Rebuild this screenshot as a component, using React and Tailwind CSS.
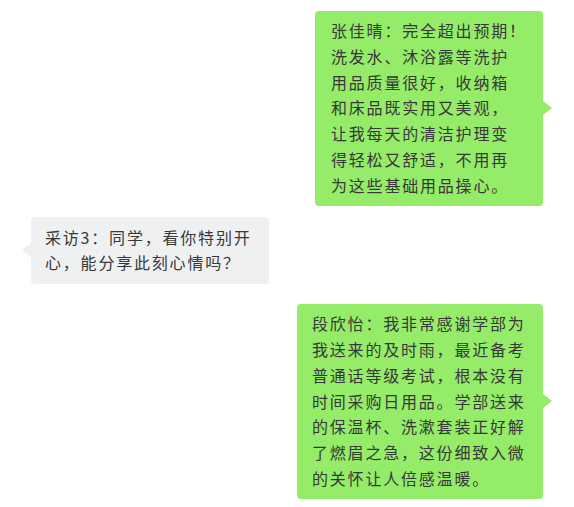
import React from "react";

function Bubble({ lines, side, className }) {
  const green = side === "right";
  return (
    <div className={`relative rounded-[4px] ${green ? "bg-[#95ec69]" : "bg-[#eef0f1]"} ${className}`}>
      {lines.map((l, i) => (
        <div key={i} className="whitespace-nowrap">{l}</div>
      ))}
      <div
        className={`absolute top-1/2 -translate-y-1/2 w-0 h-0 border-y-[7px] border-y-transparent ${
          green
            ? "right-[-9px] border-l-[9px] border-l-[#95ec69]"
            : "left-[-9px] border-r-[9px] border-r-[#eef0f1]"
        }`}
      />
    </div>
  );
}

export default function App() {
  return (
    <div
      className="w-[574px] h-[507px] bg-white px-[31px] pt-[11px] flex flex-col text-[16px] leading-[25.8px] tracking-[1.8px] text-[#383838]"
      style={{ fontFamily: '"Noto Sans CJK SC", "Noto Sans", sans-serif' }}
    >
      <div className="flex justify-end">
        <Bubble
          side="right"
          className="w-[228px] pl-4 py-[7px]"
          lines={[
            "张佳晴：完全超出预期！",
            "洗发水、沐浴露等洗护",
            "用品质量很好，收纳箱",
            "和床品既实用又美观，",
            "让我每天的清洁护理变",
            "得轻松又舒适，不用再",
            "为这些基础用品操心。",
          ]}
        />
      </div>
      <div className="flex justify-start mt-[11px]">
        <Bubble
          side="left"
          className="w-[238px] pl-[14px] py-[8px]"
          lines={["采访3：同学，看你特别开", "心，能分享此刻心情吗？"]}
        />
      </div>
      <div className="flex justify-end mt-[20px]">
        <Bubble
          side="right"
          className="w-[246px] pl-[15px] py-[7px]"
          lines={[
            "段欣怡：我非常感谢学部为",
            "我送来的及时雨，最近备考",
            "普通话等级考试，根本没有",
            "时间采购日用品。学部送来",
            "的保温杯、洗漱套装正好解",
            "了燃眉之急，这份细致入微",
            "的关怀让人倍感温暖。",
          ]}
        />
      </div>
    </div>
  );
}
